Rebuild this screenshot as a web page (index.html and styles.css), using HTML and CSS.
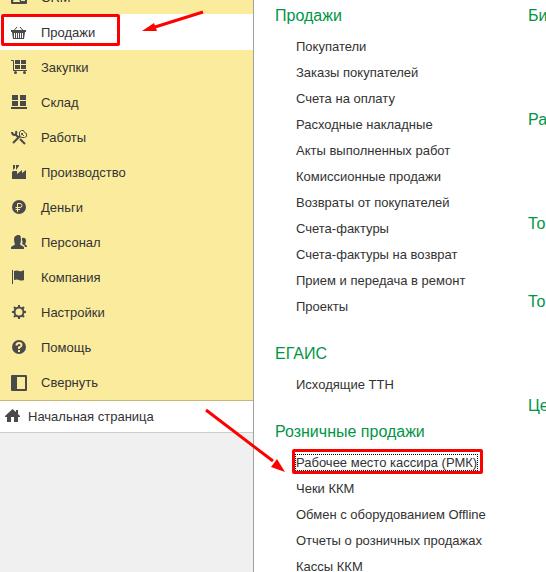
FILE: index.html
```html
<!DOCTYPE html>
<html lang="ru">
<head>
<meta charset="utf-8">
<title>Продажи</title>
<link rel="stylesheet" href="styles.css">
</head>
<body>
<div class="app">
  <aside class="sidebar">
    <nav class="sections">
      <a class="section" href="#"><svg class="icon" viewBox="0 0 16 16"><path fill-rule="evenodd" d="M1 2h14q1 0 1 1v10q0 1-1 1H1q-1 0-1-1V3q0-1 1-1zM2 12h7q0-2-2-3 1-1 1-2.500T5.500 4 3 6.500 4 9q-2 1-2 3zM10 5v2h4V5zM10 9v2h4V9z"/></svg>CRM</a>
      <a class="section current" href="#"><svg class="icon" viewBox="0 0 16 16"><path d="M0 5h15v2H0zM1 7h13l-1 7H2z"/><path class="line" d="M3 5.500L6 2M12 5.500L9 2"/><path class="cut white" d="M3.500 8v5M5.500 8v5M7.500 8v5M9.500 8v5M11.500 8v5"/></svg>Продажи<span class="frame"></span></a>
      <a class="section" href="#"><svg class="icon" viewBox="0 0 16 16"><path d="M4 0h5v4H4zM10 0h5v4h-5zM4 5h5v4H4zM10 5h5v4h-5zM2 10h14v1H2z"/><path class="line" d="M0 .500h2.500v10"/><circle cx="4.500" cy="12.500" r="1.500"/><circle cx="13.500" cy="12.500" r="1.500"/></svg>Закупки</a>
      <a class="section" href="#"><svg class="icon" viewBox="0 0 16 16"><path d="M1 0h6v5H1zM9 0h6v5H9zM1 6h6v5H1zM9 6h6v5H9zM0 12h16v2H0z"/></svg>Склад</a>
      <a class="section" href="#"><svg class="icon" viewBox="0 0 16 16"><path class="wide" d="M5 5l2 2M9 9l5 5M9 6l-7 7"/><path class="wide" d="M1 2q0 3 3 3 2-1 1-4"/><path class="line" d="M8.500 6.500V2l2-1.500h2l1 2 2 1v3l-2 1H11zM10 3l3 3M12 3l-2 2.500"/></svg>Работы</a>
      <a class="section" href="#"><svg class="icon" viewBox="0 0 16 16"><path d="M1 14V7l1-1h4v3l5-4v3l4-3v9zM2 0h2v3L2 5zM5 0h3v1L5 5z"/></svg>Производство</a>
      <a class="section" href="#"><svg class="icon" viewBox="0 0 16 16"><circle cx="8" cy="7" r="7"/><path class="cut ruble" d="M6.500 12V3.500H9q2 0 2 2t-2 2H4.500M4.500 9.500H9"/></svg>Деньги</a>
      <a class="section" href="#"><svg class="icon" viewBox="0 0 16 16"><path d="M0 14v-2l4-2.500Q3 7 3 4t3.500-4T10 4q0 3-1 5.500l4 2.500v2zM11 3q4-1 4 3 0 2-1 3l2 2v1h-2q0-2-3-3 1-2 0-4z"/></svg>Персонал</a>
      <a class="section" href="#"><svg class="icon" viewBox="0 0 16 16"><path d="M1 0h1v14H1zM3 1q3-1 5 0t5-1V10q-3 1-5 0T3 10z"/></svg>Компания</a>
      <a class="section" href="#"><svg class="icon" viewBox="0 0 16 16"><circle class="wide" cx="8" cy="7" r="4.500"/><path class="wide" d="M8 0v2M8 12v2M1 7h2M13 7h2M3 2l1.500 1.500M11.500 10.500L13 12M13 2l-1.500 1.500M4.500 10.500L3 12"/></svg>Настройки</a>
      <a class="section" href="#"><svg class="icon" viewBox="0 0 16 16"><circle cx="8" cy="7" r="7"/><path class="cut bold" d="M5.500 5.500Q5.500 3 8 3t2.500 2.200Q10.500 6.500 8 7.500V9M8 10v2"/></svg>Помощь</a>
      <button class="section" type="button"><svg class="icon" viewBox="0 0 16 16"><path fill-rule="evenodd" d="M1 0h14q1 0 1 1v14q0 1-1 1H1q-1 0-1-1V1q0-1 1-1zM6 2v12h8V2z"/></svg>Свернуть</button>
    </nav>
    <a class="home" href="#"><svg class="icon" viewBox="0 0 16 16"><path d="M7.500 0L11 3V1h2v4l2 2v1h-2v5H9V8H6v5H2V8H0V7z"/></svg>Начальная страница</a>
  </aside>
  <main class="content">
    <div class="column">
      <section class="group">
        <h2>Продажи</h2>
        <ul>
          <li><a href="#">Покупатели</a></li>
          <li><a href="#">Заказы покупателей</a></li>
          <li><a href="#">Счета на оплату</a></li>
          <li><a href="#">Расходные накладные</a></li>
          <li><a href="#">Акты выполненных работ</a></li>
          <li><a href="#">Комиссионные продажи</a></li>
          <li><a href="#">Возвраты от покупателей</a></li>
          <li><a href="#">Счета-фактуры</a></li>
          <li><a href="#">Счета-фактуры на возврат</a></li>
          <li><a href="#">Прием и передача в ремонт</a></li>
          <li><a href="#">Проекты</a></li>
        </ul>
      </section>
      <section class="group">
        <h2>ЕГАИС</h2>
        <ul>
          <li><a href="#">Исходящие ТТН</a></li>
        </ul>
      </section>
      <section class="group">
        <h2>Розничные продажи</h2>
        <ul>
          <li><a class="focused" href="#">Рабочее место кассира (РМК)<span class="frame"></span></a></li>
          <li><a href="#">Чеки ККМ</a></li>
          <li><a href="#">Обмен с оборудованием Offline</a></li>
          <li><a href="#">Отчеты о розничных продажах</a></li>
          <li><a href="#">Кассы ККМ</a></li>
        </ul>
      </section>
    </div>
    <div class="column">
      <section class="group two-rows"><h2>Би</h2></section>
      <section class="group two-rows"><h2>Ра</h2></section>
      <section class="group one-row"><h2>Тор</h2></section>
      <section class="group two-rows"><h2>То</h2></section>
      <section class="group"><h2>Це</h2></section>
    </div>
  </main>
  <svg class="arrow arrow-section" viewBox="0 0 64 24"><path class="shaft" d="M62 3L14 18"/><path class="head" d="M1 22l12-8 3 8z"/></svg>
  <svg class="arrow arrow-command" viewBox="0 0 84 66"><path class="shaft" d="M3 2l67 51"/><path class="head" d="M82 64l-14-5 6-8z"/></svg>
</div>
</body>
</html>
```
FILE: styles.css
```css
* {
  box-sizing: border-box;
}

body {
  margin: 0;
  background: #fff;
  color: #333;
  font: 13px/26px "Liberation Sans", Arial, sans-serif;
}

a {
  color: inherit;
  text-decoration: none;
}

.app {
  position: relative;
  display: grid;
  grid-template-columns: 254px minmax(0, 1fr);
  height: 100vh;
  overflow: hidden;
}

.sidebar {
  background: #f0f0f0;
  border-right: 1px solid #a0a0a0;
}

.sections {
  display: flex;
  flex-direction: column;
  margin-top: -20px;
  background: #fbec9d;
  border-bottom: 1px solid #c5b97b;
}

.section {
  position: relative;
  display: flex;
  align-items: center;
  gap: 14px;
  height: 35px;
  padding: 0 11px;
  border: 0;
  background: none;
  color: inherit;
  font: inherit;
  text-align: left;
}

.section.current {
  height: 36px;
  margin-top: -1px;
  padding-top: 2px;
  background: #fff;
}

.icon {
  flex: none;
  width: 16px;
  height: 16px;
  fill: #4a4a4a;
}

.line,
.wide,
.cut {
  fill: none;
  stroke: #4a4a4a;
}

.wide {
  stroke-width: 2;
}

.cut {
  stroke: #fbec9d;
}

.cut.white {
  stroke: #fff;
}

.cut.bold {
  stroke-width: 2;
}

.home {
  display: flex;
  align-items: center;
  gap: 7px;
  height: 32px;
  padding: 0 5px;
  background: #fff;
  border-bottom: 1px solid #ccc;
}

.content {
  display: grid;
  grid-template-columns: 253px max-content;
  padding: 3px 0 0 21px;
}

.column {
  display: flex;
  flex-direction: column;
  gap: 21px;
}

h2 {
  margin: 0;
  color: #009646;
  font-size: 16px;
  font-weight: 400;
  line-height: 26px;
}

ul {
  margin: 5px 0 0;
  padding: 0 0 0 21px;
  list-style: none;
}

li {
  white-space: nowrap;
}

.one-row {
  min-height: 57px;
}

.two-rows {
  min-height: 83px;
}

.focused {
  position: relative;
  outline: 1px dotted #000;
}

.frame {
  position: absolute;
  border: 3px solid #f00;
  border-radius: 2px;
}

.section .frame {
  top: 0;
  left: 1px;
  width: 119px;
  height: 32px;
}

.focused .frame {
  inset: -6px -6px -4px -4px;
}

.arrow {
  position: absolute;
}

.arrow-section {
  top: 9px;
  left: 141px;
  width: 64px;
}

.arrow-command {
  top: 408px;
  left: 203px;
  width: 84px;
}

.shaft {
  fill: none;
  stroke: #f00;
  stroke-width: 3;
}

.head {
  fill: #f00;
}
```
